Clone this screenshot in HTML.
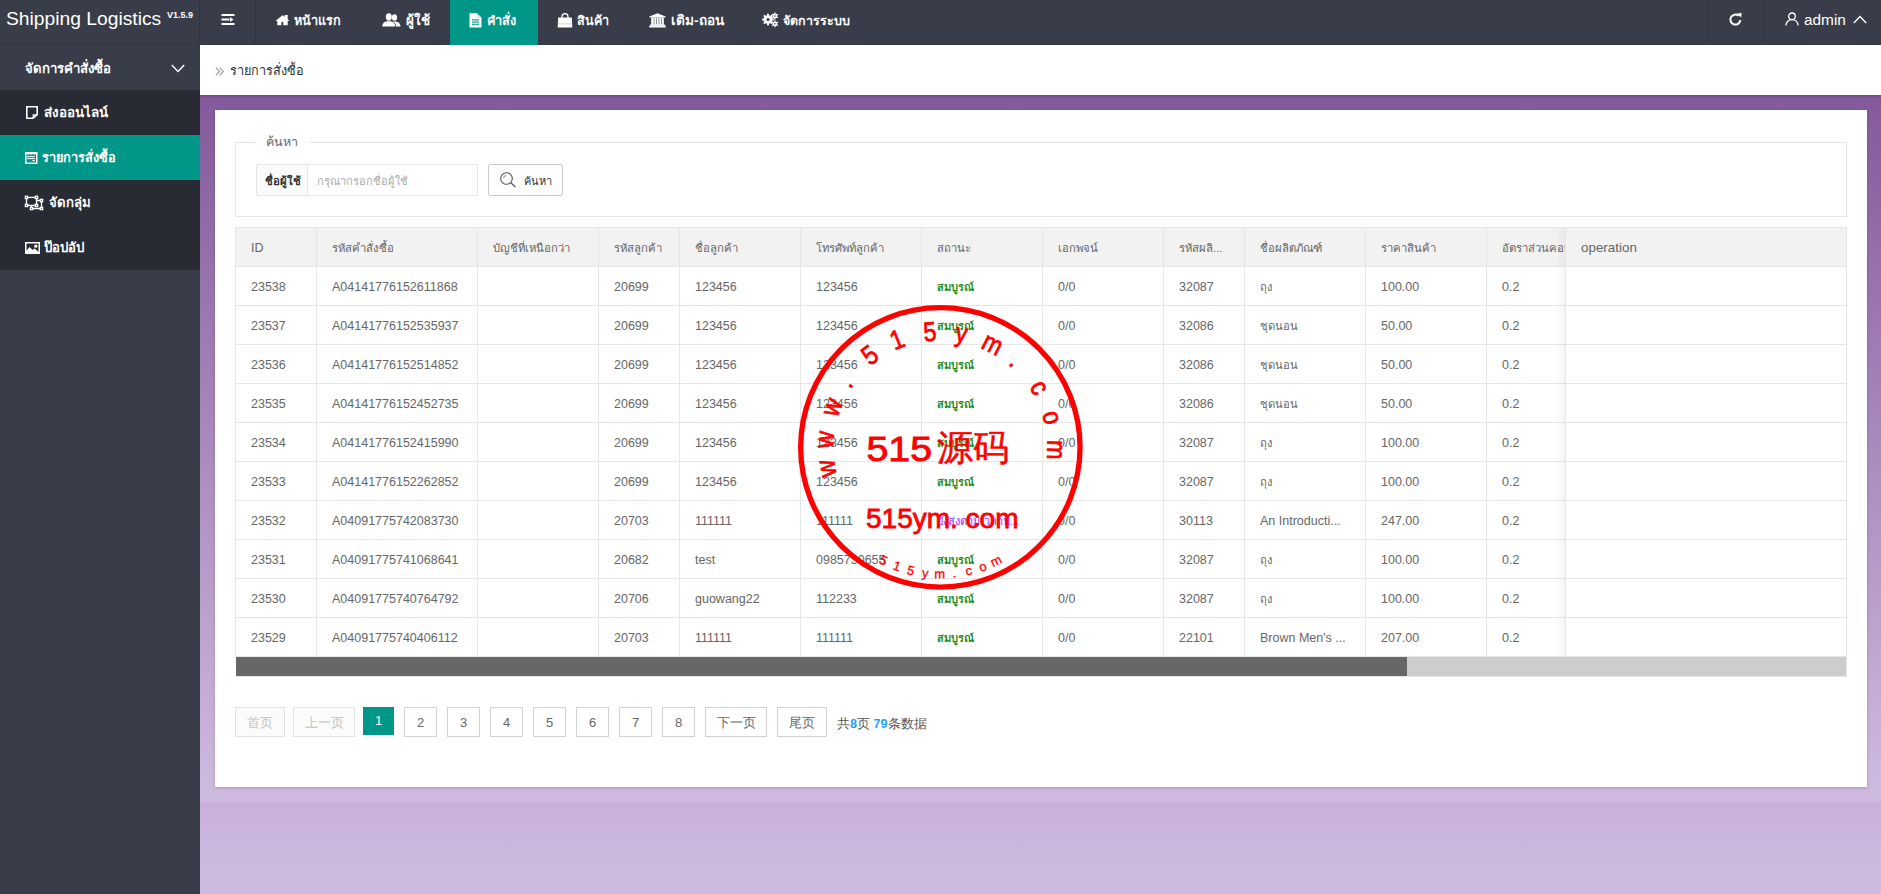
<!DOCTYPE html><html><head><meta charset="utf-8"><style>
*{box-sizing:border-box;margin:0;padding:0}
html,body{width:1881px;height:894px;overflow:hidden}
body{font-family:"Liberation Sans",sans-serif;font-size:14px;color:#666;position:relative;
background:linear-gradient(to bottom,#83599b 0,#cfbbe0 894px)}
.a{position:absolute;white-space:nowrap}
#hdr{left:0;top:0;width:1881px;height:45px;background:#393d49;border-bottom:1px solid #353944}
.vl{position:absolute;top:0;width:1px;height:44px;background:#31343e}
.wt{color:#fff;font-weight:bold}
#side{left:0;top:45px;width:200px;height:849px;background:#393d49}
#crumb{left:200px;top:45px;width:1681px;height:50px;background:#fff}
#wrap{left:200px;top:95px;width:1681px;height:707px;background:linear-gradient(to bottom,#83599b 0,#cfbbe0 707px)}
#card{left:215px;top:110px;width:1652px;height:677px;background:#fff;box-shadow:0 1px 3px 0 rgba(0,0,0,.18)}
.hl{position:absolute;background:#e6e6e6}
.t{position:absolute;white-space:nowrap;color:#666;line-height:1}
svg{position:absolute;overflow:visible}
</style></head><body>
<div id="hdr" class="a"></div>
<div class="a" style="left:6px;top:8px;color:#fff;font-size:19.25px;line-height:22px">Shipping Logistics</div>
<div class="a" style="left:167px;top:11px;color:#fff;font-size:9px;font-weight:bold;line-height:9px">V1.5.9</div>
<div class="vl" style="left:199px"></div>
<div class="vl" style="left:255px"></div>
<div class="vl" style="left:1708px"></div>
<div class="vl" style="left:1764px"></div>
<div class="a" style="left:450px;top:0;width:88px;height:45px;background:#009688"></div>
<svg style="left:221px;top:13px" width="14" height="13" viewBox="0 0 14 13"><rect x="0.5" y="1" width="13" height="2" fill="#fff"/><rect x="0.5" y="5.5" width="8" height="2" fill="#fff"/><path d="M9 4 L12.5 6.5 L9 9Z" fill="#fff"/><rect x="0.5" y="10" width="13" height="2" fill="#fff"/></svg>
<svg style="left:275px;top:14px" width="15" height="12" viewBox="0 0 15 12"><path d="M7.6 1.2 L0.9 6.5 L1.2 6.9 H2.3 V11.2 H6.3 V8 H8.2 V11.2 H12.7 V6.9 H13.8 L14.1 6.5 L12.7 5.3 V1 H9.6 V2.8Z" fill="#fff"/></svg>
<svg style="left:382px;top:13px" width="19" height="14" viewBox="0 0 19 14"><ellipse cx="6.8" cy="4" rx="3" ry="3.7" fill="#fff"/><path d="M0.2 13.6 C0.5 9.5 3 8.3 6.8 8.3 C10.6 8.3 13 9.5 13.3 13.6Z" fill="#fff"/><ellipse cx="12.5" cy="4.5" rx="2.6" ry="3.3" fill="#fff"/><path d="M11 8.6 C15.5 8.4 18.2 9.6 18.6 13.6 H14 C14 11 13 9.8 11 8.6Z" fill="#fff"/></svg>
<svg style="left:469px;top:13px" width="13" height="15" viewBox="0 0 13 15"><path d="M0.5 0.3 H7.8 L12.5 4.8 V14.5 H0.5Z" fill="#fff"/><path d="M7.8 0.3 V4.8 H12.5" fill="#cfe9e6"/><rect x="3" y="6.3" width="7" height="1.1" fill="#009688"/><rect x="3" y="8.5" width="7" height="1.1" fill="#009688"/><rect x="3" y="10.7" width="7" height="1.1" fill="#009688"/></svg>
<svg style="left:557px;top:12.8px" width="16" height="15" viewBox="0 0 16 15"><path d="M5 5 V3.8 C5 1.8 6.3 0.6 8 0.6 C9.7 0.6 11 1.8 11 3.8 V5" stroke="#fff" stroke-width="1.3" fill="none"/><path d="M1.2 4.5 H14.8 L15.3 14.5 H0.7Z" fill="#fff"/><rect x="0.9" y="10.5" width="14.2" height="0.8" fill="#c9cbd1"/></svg>
<svg style="left:648.5px;top:12.5px" width="17" height="15" viewBox="0 0 17 15"><path d="M8.5 0.3 L16.6 3.6 V4.6 H0.4 V3.6Z" fill="#fff"/><rect x="2.2" y="4.6" width="12.6" height="7" fill="#fff"/><rect x="4.6" y="5.3" width="0.8" height="5.8" fill="#6b6f7a"/><rect x="7.1" y="5.3" width="0.8" height="5.8" fill="#6b6f7a"/><rect x="9.6" y="5.3" width="0.8" height="5.8" fill="#6b6f7a"/><rect x="12.1" y="5.3" width="0.8" height="5.8" fill="#6b6f7a"/><path d="M1.5 11.2 H15.5 L16.6 13.2 V14.6 H0.4 V13.2Z" fill="#fff"/><rect x="1" y="12.6" width="15" height="0.6" fill="#d0d2d8"/></svg>
<svg style="left:762px;top:12px" width="17" height="15" viewBox="0 0 17 15"><g fill="#fff"><circle cx="6" cy="7.5" r="4.3"/><rect x="5" y="1.7" width="2" height="2.2" transform="rotate(0 6 7.5)"/><rect x="5" y="1.7" width="2" height="2.2" transform="rotate(45 6 7.5)"/><rect x="5" y="1.7" width="2" height="2.2" transform="rotate(90 6 7.5)"/><rect x="5" y="1.7" width="2" height="2.2" transform="rotate(135 6 7.5)"/><rect x="5" y="1.7" width="2" height="2.2" transform="rotate(180 6 7.5)"/><rect x="5" y="1.7" width="2" height="2.2" transform="rotate(225 6 7.5)"/><rect x="5" y="1.7" width="2" height="2.2" transform="rotate(270 6 7.5)"/><rect x="5" y="1.7" width="2" height="2.2" transform="rotate(315 6 7.5)"/><circle cx="12.9" cy="4" r="2.4"/><rect x="12.3" y="0.5" width="1.2" height="1.6" transform="rotate(0 12.9 4)"/><rect x="12.3" y="0.5" width="1.2" height="1.6" transform="rotate(60 12.9 4)"/><rect x="12.3" y="0.5" width="1.2" height="1.6" transform="rotate(120 12.9 4)"/><rect x="12.3" y="0.5" width="1.2" height="1.6" transform="rotate(180 12.9 4)"/><rect x="12.3" y="0.5" width="1.2" height="1.6" transform="rotate(240 12.9 4)"/><rect x="12.3" y="0.5" width="1.2" height="1.6" transform="rotate(300 12.9 4)"/><circle cx="12.9" cy="11.8" r="2.4"/><rect x="12.3" y="8.3" width="1.2" height="1.6" transform="rotate(0 12.9 11.8)"/><rect x="12.3" y="8.3" width="1.2" height="1.6" transform="rotate(60 12.9 11.8)"/><rect x="12.3" y="8.3" width="1.2" height="1.6" transform="rotate(120 12.9 11.8)"/><rect x="12.3" y="8.3" width="1.2" height="1.6" transform="rotate(180 12.9 11.8)"/><rect x="12.3" y="8.3" width="1.2" height="1.6" transform="rotate(240 12.9 11.8)"/><rect x="12.3" y="8.3" width="1.2" height="1.6" transform="rotate(300 12.9 11.8)"/></g><circle cx="6" cy="7.5" r="1.6" fill="#393d49"/><circle cx="12.9" cy="4" r="0.8" fill="#393d49"/><circle cx="12.9" cy="11.8" r="0.8" fill="#393d49"/></svg>
<div class="a wt" style="left:294px;top:11px;font-size:12.7px;line-height:20px">หน้าแรก</div>
<div class="a wt" style="left:406px;top:11px;font-size:13.4px;line-height:20px">ผู้ใช้</div>
<div class="a wt" style="left:487px;top:11px;font-size:12.7px;line-height:20px">คำสั่ง</div>
<div class="a wt" style="left:577px;top:11px;font-size:12.6px;line-height:20px">สินค้า</div>
<div class="a wt" style="left:671px;top:11px;font-size:13.6px;line-height:20px">เติม-ถอน</div>
<div class="a wt" style="left:783px;top:11px;font-size:12.5px;line-height:20px">จัดการระบบ</div>
<svg style="left:1728px;top:12px" width="15" height="15" viewBox="0 0 15 15"><path d="M12.3 8.2 A5 5 0 1 1 10.6 3.8" stroke="#fff" stroke-width="2" fill="none"/><path d="M9 1.8 L13.6 0.8 L13.2 5.6Z" fill="#fff"/></svg>
<svg style="left:1785px;top:12px" width="14" height="14" viewBox="0 0 14 14"><circle cx="7" cy="4.3" r="3.3" stroke="#fff" stroke-width="1.3" fill="none"/><path d="M1 13.5 C1 9.8 3.6 7.6 7 7.6 C10.4 7.6 13 9.8 13 13.5" stroke="#fff" stroke-width="1.3" fill="none"/></svg>
<div class="a" style="left:1804px;top:11px;color:#fff;font-size:15.4px;line-height:18px">admin</div>
<svg style="left:1853px;top:15px" width="14" height="9" viewBox="0 0 14 9"><path d="M0.8 8 L7 1.6 L13.2 8" stroke="#fff" stroke-width="1.4" fill="none"/></svg>
<div id="side" class="a"></div>
<div class="a wt" style="left:25px;top:59px;font-size:13.2px;line-height:20px">จัดการคำสั่งซื้อ</div>
<svg style="left:171px;top:64px" width="14" height="9" viewBox="0 0 14 9"><path d="M0.8 1 L7 7.4 L13.2 1" stroke="#fff" stroke-width="1.4" fill="none"/></svg>
<div class="a" style="left:0;top:90px;width:200px;height:180px;background:#282b33;border-radius:2px"></div>
<div class="a" style="left:0;top:135px;width:200px;height:45px;background:#009688"></div>
<div class="a wt" style="left:44px;top:103px;font-size:13.4px;line-height:20px">ส่งออนไลน์</div>
<div class="a wt" style="left:42px;top:148px;font-size:12.8px;line-height:20px">รายการสั่งซื้อ</div>
<div class="a wt" style="left:48.5px;top:193px;font-size:13.2px;line-height:20px">จัดกลุ่ม</div>
<div class="a wt" style="left:44px;top:238px;font-size:13.2px;line-height:20px">ป๊อปอัป</div>
<svg style="left:26px;top:106px" width="12" height="13" viewBox="0 0 12 13"><path d="M0.8 0.8 H11.2 V8.6 L7 12.2 H0.8Z" stroke="#fff" stroke-width="1.6" fill="none"/><path d="M11 8.8 H7.2 V12" stroke="#fff" stroke-width="1.2" fill="none"/></svg>
<svg style="left:25px;top:152px" width="13" height="12" viewBox="0 0 13 12"><rect x="0.75" y="0.75" width="11" height="10.5" stroke="#fff" stroke-width="1.5" fill="none"/><path d="M1.5 1.6 H11 M2.5 2.3 h1.3 M5.5 2.3 h1.3 M8.5 2.3 h1.3" stroke="#fff" stroke-width="1"/><rect x="2" y="4.1" width="8" height="1" fill="#fff"/><rect x="2" y="6.1" width="8" height="1" fill="#fff"/><rect x="7.3" y="8.1" width="2.7" height="1" fill="#fff"/></svg>
<svg style="left:24px;top:195px" width="20" height="16" viewBox="0 0 20 16"><g stroke="#fff" stroke-width="1.3" fill="none"><rect x="2.5" y="2.4" width="10" height="8"/><path d="M12.5 5.5 H17.5 V13.5 H7.5 V10.4"/></g><rect x="0.7" y="0.6" width="3.6" height="3.6" fill="#fff"/><circle cx="2.5" cy="2.4" r="0.6" fill="#555a66"/><rect x="10.7" y="0.6" width="3.6" height="3.6" fill="#fff"/><circle cx="12.5" cy="2.4" r="0.6" fill="#555a66"/><rect x="0.7" y="8.6" width="3.6" height="3.6" fill="#fff"/><circle cx="2.5" cy="10.4" r="0.6" fill="#555a66"/><rect x="10.7" y="8.6" width="3.6" height="3.6" fill="#fff"/><circle cx="12.5" cy="10.4" r="0.6" fill="#555a66"/><rect x="15.7" y="3.7" width="3.6" height="3.6" fill="#fff"/><circle cx="17.5" cy="5.5" r="0.6" fill="#555a66"/><rect x="5.7" y="11.7" width="3.6" height="3.6" fill="#fff"/><circle cx="7.5" cy="13.5" r="0.6" fill="#555a66"/><rect x="15.7" y="11.7" width="3.6" height="3.6" fill="#fff"/><circle cx="17.5" cy="13.5" r="0.6" fill="#555a66"/></svg>
<svg style="left:24.5px;top:242px" width="15" height="12" viewBox="0 0 15 12"><rect x="0.75" y="0.75" width="13.5" height="10.5" stroke="#fff" stroke-width="1.5" fill="none"/><path d="M1 9 L4.7 5 L7.5 8 L9.5 6.5 L14 10.3 V11.5 H1Z" fill="#fff"/><circle cx="10.8" cy="4.2" r="1.6" fill="#fff"/></svg>
<div id="crumb" class="a"></div>
<svg style="left:215px;top:66.5px" width="10" height="9" viewBox="0 0 10 9"><path d="M0.8 0.6 L4.6 4.5 L0.8 8.4 M4.6 0.6 L8.4 4.5 L4.6 8.4" stroke="#9a9a9a" stroke-width="1.1" fill="none"/></svg>
<div class="a" style="left:230px;top:61px;font-size:12.7px;line-height:20px;color:#333">รายการสั่งซื้อ</div>
<div id="wrap" class="a"></div>
<div class="a" style="left:200px;top:95px;width:1681px;height:3px;background:linear-gradient(to bottom,rgba(40,20,60,.25),rgba(40,20,60,0))"></div>
<div id="card" class="a"></div>
<div class="a" style="left:235px;top:142px;width:1612px;height:75px;border:1px solid #e6e6e6"></div>
<div class="a" style="left:256px;top:136px;width:53px;height:12px;background:#fff"></div>
<div class="t" style="left:266px;top:133px;font-size:12.5px;line-height:18px">ค้นหา</div>
<div class="a" style="left:256px;top:164px;width:222px;height:32px;border:1px solid #e6e6e6;border-radius:2px;background:#fff"></div>
<div class="a" style="left:257px;top:165px;width:51px;height:30px;background:#fafafa;border-right:1px solid #e6e6e6"></div>
<div class="t" style="left:265px;top:172px;font-size:11.4px;line-height:18px;font-weight:bold;color:#333">ชื่อผู้ใช้</div>
<div class="t" style="left:317px;top:172px;font-size:11.1px;line-height:18px;color:#aaa">กรุณากรอกชื่อผู้ใช้</div>
<div class="a" style="left:488px;top:164px;width:75px;height:32px;border:1px solid #c9c9c9;border-radius:2px;background:#fff"></div>
<svg style="left:500px;top:172px" width="17" height="16" viewBox="0 0 17 16"><circle cx="6.5" cy="6.5" r="5.8" stroke="#555" stroke-width="1.1" fill="none"/><path d="M10.8 10.8 L15.5 15" stroke="#555" stroke-width="1.3"/><path d="M3.5 6 A3 3 0 0 1 6 3.5" stroke="#555" stroke-width="0.8" fill="none"/></svg>
<div class="t" style="left:524px;top:172px;font-size:11px;line-height:18px;color:#333">ค้นหา</div>
<div class="a" style="left:235px;top:227px;width:1612px;height:430px;border:1px solid #e6e6e6;border-bottom:0;background:#fff"></div>
<div class="a" style="left:236px;top:228px;width:1610px;height:38px;background:#f2f2f2"></div>
<div class="hl" style="left:316px;top:228px;width:1px;height:429px"></div>
<div class="hl" style="left:477px;top:228px;width:1px;height:429px"></div>
<div class="hl" style="left:598px;top:228px;width:1px;height:429px"></div>
<div class="hl" style="left:679px;top:228px;width:1px;height:429px"></div>
<div class="hl" style="left:800px;top:228px;width:1px;height:429px"></div>
<div class="hl" style="left:921px;top:228px;width:1px;height:429px"></div>
<div class="hl" style="left:1042px;top:228px;width:1px;height:429px"></div>
<div class="hl" style="left:1163px;top:228px;width:1px;height:429px"></div>
<div class="hl" style="left:1244px;top:228px;width:1px;height:429px"></div>
<div class="hl" style="left:1365px;top:228px;width:1px;height:429px"></div>
<div class="hl" style="left:1486px;top:228px;width:1px;height:429px"></div>
<div class="hl" style="left:236px;top:266px;width:1610px;height:1px"></div>
<div class="hl" style="left:236px;top:305px;width:1610px;height:1px"></div>
<div class="hl" style="left:236px;top:344px;width:1610px;height:1px"></div>
<div class="hl" style="left:236px;top:383px;width:1610px;height:1px"></div>
<div class="hl" style="left:236px;top:422px;width:1610px;height:1px"></div>
<div class="hl" style="left:236px;top:461px;width:1610px;height:1px"></div>
<div class="hl" style="left:236px;top:500px;width:1610px;height:1px"></div>
<div class="hl" style="left:236px;top:539px;width:1610px;height:1px"></div>
<div class="hl" style="left:236px;top:578px;width:1610px;height:1px"></div>
<div class="hl" style="left:236px;top:617px;width:1610px;height:1px"></div>
<div class="hl" style="left:236px;top:656px;width:1610px;height:1px"></div>
<div class="a" style="left:236px;top:228px;width:1329px;height:428px;overflow:hidden">
<div class="t" style="left:15px;top:10px;font-size:12.5px;line-height:20px">ID</div>
<div class="t" style="left:96px;top:10px;font-size:11.3px;line-height:20px">รหัสคำสั่งซื้อ</div>
<div class="t" style="left:257px;top:10px;font-size:11.3px;line-height:20px">บัญชีที่เหนือกว่า</div>
<div class="t" style="left:378px;top:10px;font-size:11.3px;line-height:20px">รหัสลูกค้า</div>
<div class="t" style="left:459px;top:10px;font-size:11.3px;line-height:20px">ชื่อลูกค้า</div>
<div class="t" style="left:580px;top:10px;font-size:11.3px;line-height:20px">โทรศัพท์ลูกค้า</div>
<div class="t" style="left:701px;top:10px;font-size:11.3px;line-height:20px">สถานะ</div>
<div class="t" style="left:822px;top:10px;font-size:11.3px;line-height:20px">เอกพจน์</div>
<div class="t" style="left:943px;top:10px;font-size:11.3px;line-height:20px">รหัสผลิ...</div>
<div class="t" style="left:1024px;top:10px;font-size:11.3px;line-height:20px">ชื่อผลิตภัณฑ์</div>
<div class="t" style="left:1145px;top:10px;font-size:11.3px;line-height:20px">ราคาสินค้า</div>
<div class="t" style="left:1266px;top:10px;font-size:11.3px;line-height:20px">อัตราส่วนคอมมิชชั่น</div>
<div class="t" style="left:15px;top:49px;font-size:12.5px;line-height:20px">23538</div>
<div class="t" style="left:96px;top:49px;font-size:12.5px;line-height:20px">A04141776152611868</div>
<div class="t" style="left:378px;top:49px;font-size:12.5px;line-height:20px">20699</div>
<div class="t" style="left:459px;top:49px;font-size:12.5px;line-height:20px">123456</div>
<div class="t" style="left:580px;top:49px;font-size:12.5px;line-height:20px">123456</div>
<div class="t" style="left:701px;top:49px;font-size:11px;line-height:20px;color:#008000;-webkit-text-stroke:0.25px #008000">สมบูรณ์</div>
<div class="t" style="left:822px;top:49px;font-size:12.5px;line-height:20px">0/0</div>
<div class="t" style="left:943px;top:49px;font-size:12.5px;line-height:20px">32087</div>
<div class="t" style="left:1024px;top:49px;font-size:11.2px;line-height:20px">ถุง</div>
<div class="t" style="left:1145px;top:49px;font-size:12.5px;line-height:20px">100.00</div>
<div class="t" style="left:1266px;top:49px;font-size:12.5px;line-height:20px">0.2</div>
<div class="t" style="left:15px;top:88px;font-size:12.5px;line-height:20px">23537</div>
<div class="t" style="left:96px;top:88px;font-size:12.5px;line-height:20px">A04141776152535937</div>
<div class="t" style="left:378px;top:88px;font-size:12.5px;line-height:20px">20699</div>
<div class="t" style="left:459px;top:88px;font-size:12.5px;line-height:20px">123456</div>
<div class="t" style="left:580px;top:88px;font-size:12.5px;line-height:20px">123456</div>
<div class="t" style="left:701px;top:88px;font-size:11px;line-height:20px;color:#008000;-webkit-text-stroke:0.25px #008000">สมบูรณ์</div>
<div class="t" style="left:822px;top:88px;font-size:12.5px;line-height:20px">0/0</div>
<div class="t" style="left:943px;top:88px;font-size:12.5px;line-height:20px">32086</div>
<div class="t" style="left:1024px;top:88px;font-size:11.2px;line-height:20px">ชุดนอน</div>
<div class="t" style="left:1145px;top:88px;font-size:12.5px;line-height:20px">50.00</div>
<div class="t" style="left:1266px;top:88px;font-size:12.5px;line-height:20px">0.2</div>
<div class="t" style="left:15px;top:127px;font-size:12.5px;line-height:20px">23536</div>
<div class="t" style="left:96px;top:127px;font-size:12.5px;line-height:20px">A04141776152514852</div>
<div class="t" style="left:378px;top:127px;font-size:12.5px;line-height:20px">20699</div>
<div class="t" style="left:459px;top:127px;font-size:12.5px;line-height:20px">123456</div>
<div class="t" style="left:580px;top:127px;font-size:12.5px;line-height:20px">123456</div>
<div class="t" style="left:701px;top:127px;font-size:11px;line-height:20px;color:#008000;-webkit-text-stroke:0.25px #008000">สมบูรณ์</div>
<div class="t" style="left:822px;top:127px;font-size:12.5px;line-height:20px">0/0</div>
<div class="t" style="left:943px;top:127px;font-size:12.5px;line-height:20px">32086</div>
<div class="t" style="left:1024px;top:127px;font-size:11.2px;line-height:20px">ชุดนอน</div>
<div class="t" style="left:1145px;top:127px;font-size:12.5px;line-height:20px">50.00</div>
<div class="t" style="left:1266px;top:127px;font-size:12.5px;line-height:20px">0.2</div>
<div class="t" style="left:15px;top:166px;font-size:12.5px;line-height:20px">23535</div>
<div class="t" style="left:96px;top:166px;font-size:12.5px;line-height:20px">A04141776152452735</div>
<div class="t" style="left:378px;top:166px;font-size:12.5px;line-height:20px">20699</div>
<div class="t" style="left:459px;top:166px;font-size:12.5px;line-height:20px">123456</div>
<div class="t" style="left:580px;top:166px;font-size:12.5px;line-height:20px">123456</div>
<div class="t" style="left:701px;top:166px;font-size:11px;line-height:20px;color:#008000;-webkit-text-stroke:0.25px #008000">สมบูรณ์</div>
<div class="t" style="left:822px;top:166px;font-size:12.5px;line-height:20px">0/0</div>
<div class="t" style="left:943px;top:166px;font-size:12.5px;line-height:20px">32086</div>
<div class="t" style="left:1024px;top:166px;font-size:11.2px;line-height:20px">ชุดนอน</div>
<div class="t" style="left:1145px;top:166px;font-size:12.5px;line-height:20px">50.00</div>
<div class="t" style="left:1266px;top:166px;font-size:12.5px;line-height:20px">0.2</div>
<div class="t" style="left:15px;top:205px;font-size:12.5px;line-height:20px">23534</div>
<div class="t" style="left:96px;top:205px;font-size:12.5px;line-height:20px">A04141776152415990</div>
<div class="t" style="left:378px;top:205px;font-size:12.5px;line-height:20px">20699</div>
<div class="t" style="left:459px;top:205px;font-size:12.5px;line-height:20px">123456</div>
<div class="t" style="left:580px;top:205px;font-size:12.5px;line-height:20px">123456</div>
<div class="t" style="left:701px;top:205px;font-size:11px;line-height:20px;color:#008000;-webkit-text-stroke:0.25px #008000">สมบูรณ์</div>
<div class="t" style="left:822px;top:205px;font-size:12.5px;line-height:20px">0/0</div>
<div class="t" style="left:943px;top:205px;font-size:12.5px;line-height:20px">32087</div>
<div class="t" style="left:1024px;top:205px;font-size:11.2px;line-height:20px">ถุง</div>
<div class="t" style="left:1145px;top:205px;font-size:12.5px;line-height:20px">100.00</div>
<div class="t" style="left:1266px;top:205px;font-size:12.5px;line-height:20px">0.2</div>
<div class="t" style="left:15px;top:244px;font-size:12.5px;line-height:20px">23533</div>
<div class="t" style="left:96px;top:244px;font-size:12.5px;line-height:20px">A04141776152262852</div>
<div class="t" style="left:378px;top:244px;font-size:12.5px;line-height:20px">20699</div>
<div class="t" style="left:459px;top:244px;font-size:12.5px;line-height:20px">123456</div>
<div class="t" style="left:580px;top:244px;font-size:12.5px;line-height:20px">123456</div>
<div class="t" style="left:701px;top:244px;font-size:11px;line-height:20px;color:#008000;-webkit-text-stroke:0.25px #008000">สมบูรณ์</div>
<div class="t" style="left:822px;top:244px;font-size:12.5px;line-height:20px">0/0</div>
<div class="t" style="left:943px;top:244px;font-size:12.5px;line-height:20px">32087</div>
<div class="t" style="left:1024px;top:244px;font-size:11.2px;line-height:20px">ถุง</div>
<div class="t" style="left:1145px;top:244px;font-size:12.5px;line-height:20px">100.00</div>
<div class="t" style="left:1266px;top:244px;font-size:12.5px;line-height:20px">0.2</div>
<div class="t" style="left:15px;top:283px;font-size:12.5px;line-height:20px">23532</div>
<div class="t" style="left:96px;top:283px;font-size:12.5px;line-height:20px">A04091775742083730</div>
<div class="t" style="left:378px;top:283px;font-size:12.5px;line-height:20px">20703</div>
<div class="t" style="left:459px;top:283px;font-size:12.5px;line-height:20px">111111</div>
<div class="t" style="left:580px;top:283px;font-size:12.5px;line-height:20px">111111</div>
<div class="t" style="left:701px;top:283px;font-size:11px;line-height:20px;color:#9933ff">ยังส่งตามเวลาป...</div>
<div class="t" style="left:822px;top:283px;font-size:12.5px;line-height:20px">0/0</div>
<div class="t" style="left:943px;top:283px;font-size:12.5px;line-height:20px">30113</div>
<div class="t" style="left:1024px;top:283px;font-size:12.5px;line-height:20px">An Introducti...</div>
<div class="t" style="left:1145px;top:283px;font-size:12.5px;line-height:20px">247.00</div>
<div class="t" style="left:1266px;top:283px;font-size:12.5px;line-height:20px">0.2</div>
<div class="t" style="left:15px;top:322px;font-size:12.5px;line-height:20px">23531</div>
<div class="t" style="left:96px;top:322px;font-size:12.5px;line-height:20px">A04091775741068641</div>
<div class="t" style="left:378px;top:322px;font-size:12.5px;line-height:20px">20682</div>
<div class="t" style="left:459px;top:322px;font-size:12.5px;line-height:20px">test</div>
<div class="t" style="left:580px;top:322px;font-size:12.5px;line-height:20px">0985730655</div>
<div class="t" style="left:701px;top:322px;font-size:11px;line-height:20px;color:#008000;-webkit-text-stroke:0.25px #008000">สมบูรณ์</div>
<div class="t" style="left:822px;top:322px;font-size:12.5px;line-height:20px">0/0</div>
<div class="t" style="left:943px;top:322px;font-size:12.5px;line-height:20px">32087</div>
<div class="t" style="left:1024px;top:322px;font-size:11.2px;line-height:20px">ถุง</div>
<div class="t" style="left:1145px;top:322px;font-size:12.5px;line-height:20px">100.00</div>
<div class="t" style="left:1266px;top:322px;font-size:12.5px;line-height:20px">0.2</div>
<div class="t" style="left:15px;top:361px;font-size:12.5px;line-height:20px">23530</div>
<div class="t" style="left:96px;top:361px;font-size:12.5px;line-height:20px">A04091775740764792</div>
<div class="t" style="left:378px;top:361px;font-size:12.5px;line-height:20px">20706</div>
<div class="t" style="left:459px;top:361px;font-size:12.5px;line-height:20px">guowang22</div>
<div class="t" style="left:580px;top:361px;font-size:12.5px;line-height:20px">112233</div>
<div class="t" style="left:701px;top:361px;font-size:11px;line-height:20px;color:#008000;-webkit-text-stroke:0.25px #008000">สมบูรณ์</div>
<div class="t" style="left:822px;top:361px;font-size:12.5px;line-height:20px">0/0</div>
<div class="t" style="left:943px;top:361px;font-size:12.5px;line-height:20px">32087</div>
<div class="t" style="left:1024px;top:361px;font-size:11.2px;line-height:20px">ถุง</div>
<div class="t" style="left:1145px;top:361px;font-size:12.5px;line-height:20px">100.00</div>
<div class="t" style="left:1266px;top:361px;font-size:12.5px;line-height:20px">0.2</div>
<div class="t" style="left:15px;top:400px;font-size:12.5px;line-height:20px">23529</div>
<div class="t" style="left:96px;top:400px;font-size:12.5px;line-height:20px">A04091775740406112</div>
<div class="t" style="left:378px;top:400px;font-size:12.5px;line-height:20px">20703</div>
<div class="t" style="left:459px;top:400px;font-size:12.5px;line-height:20px">111111</div>
<div class="t" style="left:580px;top:400px;font-size:12.5px;line-height:20px">111111</div>
<div class="t" style="left:701px;top:400px;font-size:11px;line-height:20px;color:#008000;-webkit-text-stroke:0.25px #008000">สมบูรณ์</div>
<div class="t" style="left:822px;top:400px;font-size:12.5px;line-height:20px">0/0</div>
<div class="t" style="left:943px;top:400px;font-size:12.5px;line-height:20px">22101</div>
<div class="t" style="left:1024px;top:400px;font-size:12.5px;line-height:20px">Brown Men's ...</div>
<div class="t" style="left:1145px;top:400px;font-size:12.5px;line-height:20px">207.00</div>
<div class="t" style="left:1266px;top:400px;font-size:12.5px;line-height:20px">0.2</div>
</div>
<div class="a" style="left:1555px;top:228px;width:10px;height:428px;background:linear-gradient(to right,rgba(0,0,0,0),rgba(0,0,0,.035))"></div>
<div class="a" style="left:1565px;top:228px;width:281px;height:428px;background:#fff;border-left:1px solid #e6e6e6"></div>
<div class="a" style="left:1566px;top:228px;width:280px;height:38px;background:#f2f2f2"></div>
<div class="hl" style="left:1566px;top:266px;width:280px;height:1px"></div>
<div class="hl" style="left:1566px;top:305px;width:280px;height:1px"></div>
<div class="hl" style="left:1566px;top:344px;width:280px;height:1px"></div>
<div class="hl" style="left:1566px;top:383px;width:280px;height:1px"></div>
<div class="hl" style="left:1566px;top:422px;width:280px;height:1px"></div>
<div class="hl" style="left:1566px;top:461px;width:280px;height:1px"></div>
<div class="hl" style="left:1566px;top:500px;width:280px;height:1px"></div>
<div class="hl" style="left:1566px;top:539px;width:280px;height:1px"></div>
<div class="hl" style="left:1566px;top:578px;width:280px;height:1px"></div>
<div class="hl" style="left:1566px;top:617px;width:280px;height:1px"></div>
<div class="t" style="left:1581px;top:238px;font-size:13.4px;line-height:20px">operation</div>
<div class="a" style="left:236px;top:657px;width:1610px;height:19px;background:#cdcdcd"></div>
<div class="a" style="left:236px;top:657px;width:1171px;height:19px;background:#676767"></div>
<div class="hl" style="left:1846px;top:227px;width:1px;height:450px"></div>
<div class="hl" style="left:235px;top:676px;width:1612px;height:1px"></div>
<div class="a" style="left:235px;top:707px;width:50px;height:30px;border:1px solid #e2e2e2;background:#fbfbfb;color:#c2c2c2;font-size:13px;line-height:30px;text-align:center">首页</div>
<div class="a" style="left:293px;top:707px;width:62px;height:30px;border:1px solid #e2e2e2;background:#fbfbfb;color:#c2c2c2;font-size:13px;line-height:30px;text-align:center">上一页</div>
<div class="a" style="left:363px;top:707px;width:31px;height:28px;background:#009688;color:#fff;font-size:13px;line-height:28px;text-align:center">1</div>
<div class="a" style="left:404px;top:707px;width:33px;height:30px;border:1px solid #d2d2d2;background:#fff;color:#666;font-size:13px;line-height:30px;text-align:center">2</div>
<div class="a" style="left:447px;top:707px;width:33px;height:30px;border:1px solid #d2d2d2;background:#fff;color:#666;font-size:13px;line-height:30px;text-align:center">3</div>
<div class="a" style="left:490px;top:707px;width:33px;height:30px;border:1px solid #d2d2d2;background:#fff;color:#666;font-size:13px;line-height:30px;text-align:center">4</div>
<div class="a" style="left:533px;top:707px;width:33px;height:30px;border:1px solid #d2d2d2;background:#fff;color:#666;font-size:13px;line-height:30px;text-align:center">5</div>
<div class="a" style="left:576px;top:707px;width:33px;height:30px;border:1px solid #d2d2d2;background:#fff;color:#666;font-size:13px;line-height:30px;text-align:center">6</div>
<div class="a" style="left:619px;top:707px;width:33px;height:30px;border:1px solid #d2d2d2;background:#fff;color:#666;font-size:13px;line-height:30px;text-align:center">7</div>
<div class="a" style="left:662px;top:707px;width:33px;height:30px;border:1px solid #d2d2d2;background:#fff;color:#666;font-size:13px;line-height:30px;text-align:center">8</div>
<div class="a" style="left:705px;top:707px;width:62px;height:30px;border:1px solid #d2d2d2;background:#fff;color:#666;font-size:13px;line-height:30px;text-align:center">下一页</div>
<div class="a" style="left:777px;top:707px;width:50px;height:30px;border:1px solid #d2d2d2;background:#fff;color:#666;font-size:13px;line-height:30px;text-align:center">尾页</div>
<div class="t" style="left:837px;top:715px;font-size:12.6px;line-height:18px;color:#555">共<b style="color:#1e9fff">8</b>页 <b style="color:#1e9fff">79</b>条数据</div>
<svg style="left:0;top:0" width="1881" height="894" viewBox="0 0 1881 894">
<circle cx="940.35" cy="447.35" r="139.7" stroke="#f00" stroke-width="5.3" fill="none"/>
<text x="0" y="0" transform="rotate(-100.60 940.35 447.35) translate(940.35 340.35) scale(0.86 1)" text-anchor="middle" font-family="Liberation Sans" font-size="27" fill="#f00" stroke="#f00" stroke-width="0.8">w</text>
<text x="0" y="0" transform="rotate(-86.10 940.35 447.35) translate(940.35 340.35) scale(0.86 1)" text-anchor="middle" font-family="Liberation Sans" font-size="27" fill="#f00" stroke="#f00" stroke-width="0.8">w</text>
<text x="0" y="0" transform="rotate(-69.60 940.35 447.35) translate(940.35 340.35) scale(0.86 1)" text-anchor="middle" font-family="Liberation Sans" font-size="27" fill="#f00" stroke="#f00" stroke-width="0.8">w</text>
<text x="0" y="0" transform="rotate(-55.50 940.35 447.35) translate(940.35 340.35) scale(0.86 1)" text-anchor="middle" font-family="Liberation Sans" font-size="27" fill="#f00" stroke="#f00" stroke-width="0.8">.</text>
<text x="0" y="0" transform="rotate(-37.40 940.35 447.35) translate(940.35 340.35) scale(0.86 1)" text-anchor="middle" font-family="Liberation Sans" font-size="27" fill="#f00" stroke="#f00" stroke-width="0.8">5</text>
<text x="0" y="0" transform="rotate(-21.90 940.35 447.35) translate(940.35 340.35) scale(0.86 1)" text-anchor="middle" font-family="Liberation Sans" font-size="27" fill="#f00" stroke="#f00" stroke-width="0.8">1</text>
<text x="0" y="0" transform="rotate(-5.20 940.35 447.35) translate(940.35 340.35) scale(0.86 1)" text-anchor="middle" font-family="Liberation Sans" font-size="27" fill="#f00" stroke="#f00" stroke-width="0.8">5</text>
<text x="0" y="0" transform="rotate(10.50 940.35 447.35) translate(940.35 340.35) scale(0.86 1)" text-anchor="middle" font-family="Liberation Sans" font-size="27" fill="#f00" stroke="#f00" stroke-width="0.8">y</text>
<text x="0" y="0" transform="rotate(26.80 940.35 447.35) translate(940.35 340.35) scale(0.86 1)" text-anchor="middle" font-family="Liberation Sans" font-size="27" fill="#f00" stroke="#f00" stroke-width="0.8">m</text>
<text x="0" y="0" transform="rotate(40.80 940.35 447.35) translate(940.35 340.35) scale(0.86 1)" text-anchor="middle" font-family="Liberation Sans" font-size="27" fill="#f00" stroke="#f00" stroke-width="0.8">.</text>
<text x="0" y="0" transform="rotate(58.90 940.35 447.35) translate(940.35 340.35) scale(0.86 1)" text-anchor="middle" font-family="Liberation Sans" font-size="27" fill="#f00" stroke="#f00" stroke-width="0.8">c</text>
<text x="0" y="0" transform="rotate(75.00 940.35 447.35) translate(940.35 340.35) scale(0.86 1)" text-anchor="middle" font-family="Liberation Sans" font-size="27" fill="#f00" stroke="#f00" stroke-width="0.8">o</text>
<text x="0" y="0" transform="rotate(91.20 940.35 447.35) translate(940.35 340.35) scale(0.86 1)" text-anchor="middle" font-family="Liberation Sans" font-size="27" fill="#f00" stroke="#f00" stroke-width="0.8">m</text>
<text x="940.35" y="578.35" transform="rotate(26.70 940.35 447.35)" text-anchor="middle" font-family="Liberation Sans" font-size="13" fill="#f00" stroke="#f00" stroke-width="0.3">5</text>
<text x="940.35" y="578.35" transform="rotate(20.10 940.35 447.35)" text-anchor="middle" font-family="Liberation Sans" font-size="13" fill="#f00" stroke="#f00" stroke-width="0.3">1</text>
<text x="940.35" y="578.35" transform="rotate(13.50 940.35 447.35)" text-anchor="middle" font-family="Liberation Sans" font-size="13" fill="#f00" stroke="#f00" stroke-width="0.3">5</text>
<text x="940.35" y="578.35" transform="rotate(6.90 940.35 447.35)" text-anchor="middle" font-family="Liberation Sans" font-size="13" fill="#f00" stroke="#f00" stroke-width="0.3">y</text>
<text x="940.35" y="578.35" transform="rotate(0.30 940.35 447.35)" text-anchor="middle" font-family="Liberation Sans" font-size="13" fill="#f00" stroke="#f00" stroke-width="0.3">m</text>
<text x="940.35" y="578.35" transform="rotate(-6.30 940.35 447.35)" text-anchor="middle" font-family="Liberation Sans" font-size="13" fill="#f00" stroke="#f00" stroke-width="0.3">.</text>
<text x="940.35" y="578.35" transform="rotate(-12.90 940.35 447.35)" text-anchor="middle" font-family="Liberation Sans" font-size="13" fill="#f00" stroke="#f00" stroke-width="0.3">c</text>
<text x="940.35" y="578.35" transform="rotate(-19.50 940.35 447.35)" text-anchor="middle" font-family="Liberation Sans" font-size="13" fill="#f00" stroke="#f00" stroke-width="0.3">o</text>
<text x="940.35" y="578.35" transform="rotate(-26.10 940.35 447.35)" text-anchor="middle" font-family="Liberation Sans" font-size="13" fill="#f00" stroke="#f00" stroke-width="0.3">m</text>
<text x="0" y="0" transform="translate(866.5 460.5) scale(1.09 1)" font-family="Liberation Sans" font-size="36" fill="#f00" stroke="#f00" stroke-width="0.9">515</text>
<text x="937" y="460" font-family="Liberation Sans" font-size="36" fill="#f00" stroke="#f00" stroke-width="0.5">源码</text>
<text x="866" y="527.5" font-family="Liberation Sans" font-size="28" fill="#f00" stroke="#f00" stroke-width="0.8">515ym. com</text>
</svg>
</body></html>
